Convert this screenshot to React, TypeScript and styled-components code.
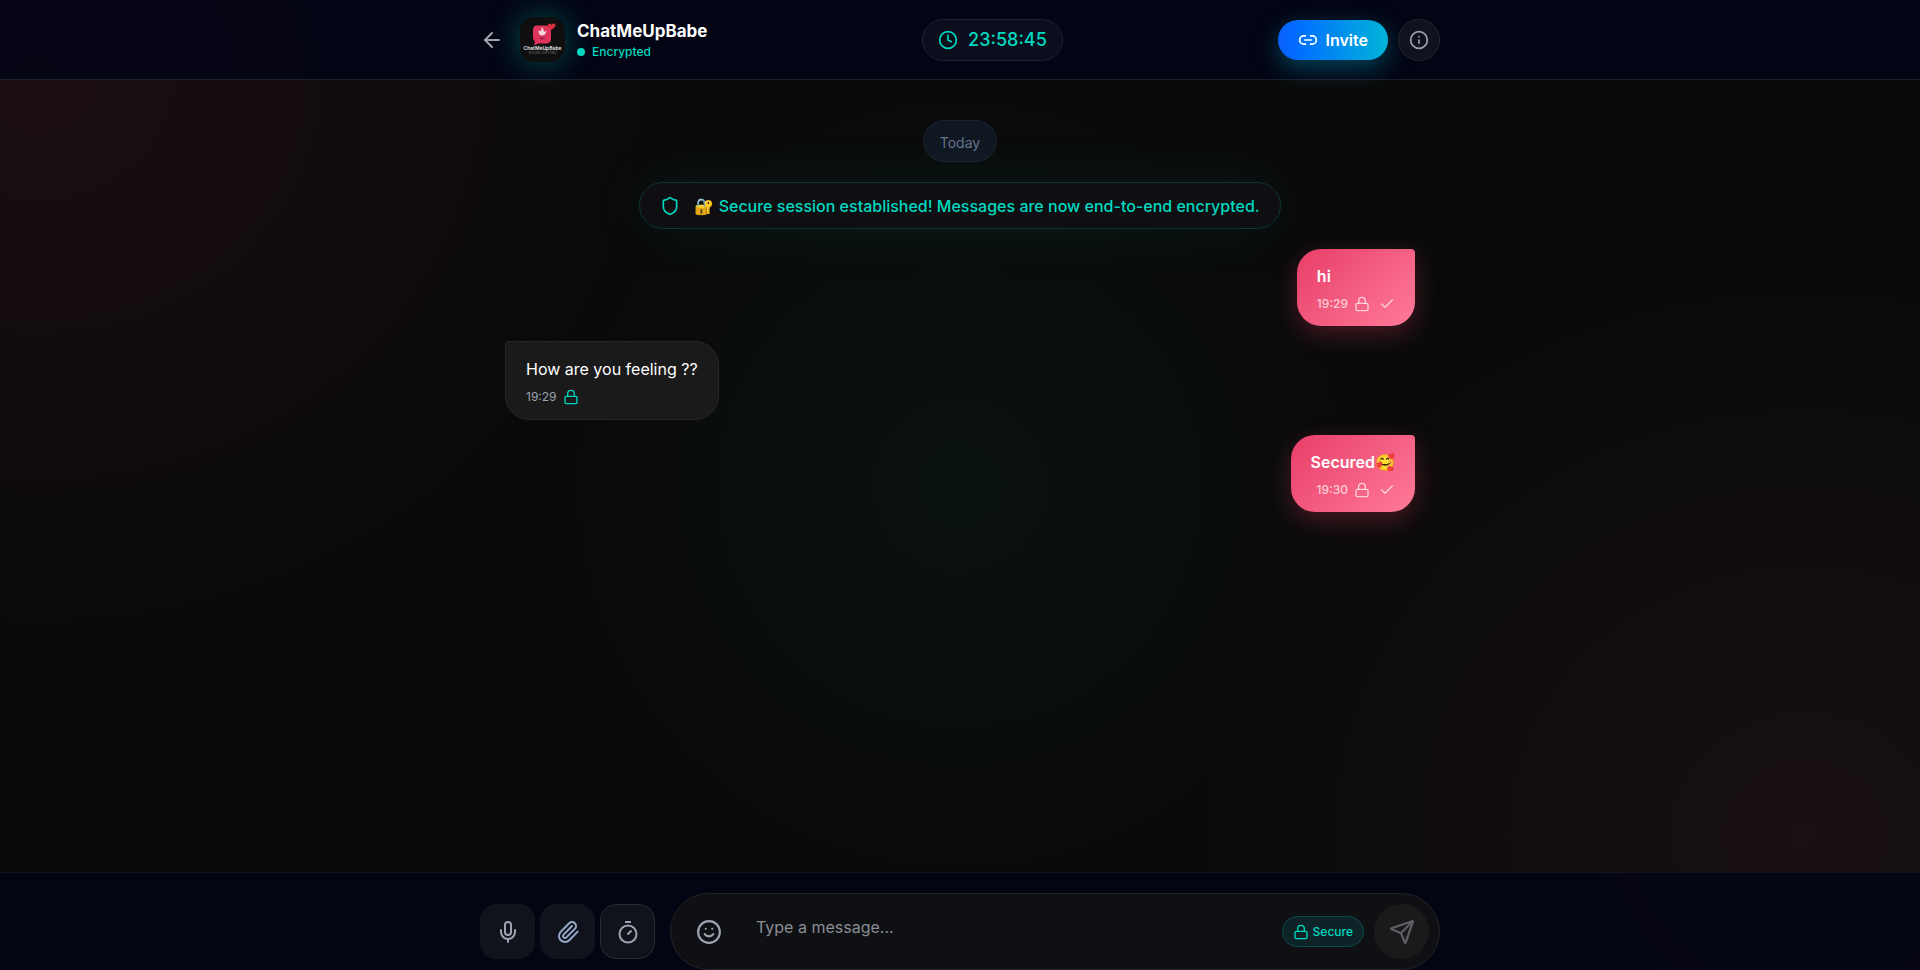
import React from 'react';
import styled, { createGlobalStyle, css } from 'styled-components';
import { ArrowLeft, Check, Clock, Info, Link2, Lock, Mic, Paperclip, Send, Shield, Smile } from 'lucide-react';

const teal = '#00d9c0';
const muted = '#9ca3af';

const GlobalStyle = createGlobalStyle`
  * { box-sizing: border-box; }
  body {
    margin: 0;
    background: #0a0a0a;
    color: #ffffff;
    font-family: Inter, "Liberation Sans", sans-serif;
  }
  button, textarea { font: inherit; color: inherit; }
  button { cursor: pointer; padding: 0; border: 0; background: none; }
`;

const Page = styled.div`
  min-height: 100vh;
  display: flex;
  flex-direction: column;
  background:
    radial-gradient(ellipse 620px 560px at 2% 8%, rgba(255, 71, 110, 0.07), transparent),
    radial-gradient(ellipse 620px 560px at 94% 86%, rgba(255, 107, 139, 0.06), transparent),
    radial-gradient(circle 400px at 50% 50%, rgba(0, 217, 192, 0.04), transparent),
    #0a0a0a;
`;

const Header = styled.header`
  border-bottom: 1px solid #1d1f2b;
  background: rgba(1, 4, 22, 0.8);
`;

const Bar = styled.div`
  width: 100%;
  max-width: 960px;
  margin: 0 auto;
`;

const HeaderBar = styled(Bar)`
  height: 79px;
  display: flex;
  align-items: center;
  justify-content: space-between;
`;

const Group = styled.div<{ $gap: number }>`
  display: flex;
  align-items: center;
  gap: ${({ $gap }) => $gap}px;
`;

const BackButton = styled.button`
  display: flex;
  margin-right: 4px;
  color: ${muted};
`;

const Logo = styled.svg`
  width: 45px;
  height: 45px;
  border-radius: 14px;
  background: #0f0f0f;
  box-shadow: 0 0 30px rgba(0, 217, 192, 0.35);
`;

const Title = styled.h1`
  margin: 0;
  font-size: 17px;
  line-height: 24px;
  font-weight: 700;
`;

const Status = styled.div`
  display: flex;
  align-items: center;
  gap: 7px;
  font-size: 12px;
  line-height: 18px;
  font-weight: 500;
  color: ${teal};
`;

const Dot = styled.span`
  width: 8px;
  height: 8px;
  border-radius: 50%;
  background: ${teal};
`;

const Timer = styled.div`
  height: 42px;
  padding: 0 15px;
  display: flex;
  align-items: center;
  gap: 10px;
  border: 1px solid #1f2230;
  border-radius: 21px;
  background: #0a0e1d;
  color: ${teal};
  font-size: 18px;
  font-weight: 500;
`;

const InviteButton = styled.button`
  height: 40px;
  padding: 0 20px;
  display: flex;
  align-items: center;
  gap: 8px;
  border-radius: 20px;
  background: linear-gradient(90deg, #0a60ff, #0070ff 20%, #00b4d8);
  box-shadow: 0 8px 24px rgba(0, 180, 216, 0.35);
  font-size: 16px;
  font-weight: 600;
`;

const InfoButton = styled.button`
  width: 42px;
  height: 42px;
  display: grid;
  place-items: center;
  border: 1px solid #23252f;
  border-radius: 50%;
  background: #10131e;
  color: ${muted};
`;

const Chat = styled.main`
  flex: 1;
  display: flex;
`;

const Messages = styled(Bar)`
  padding: 40px 25px;
  display: flex;
  flex-direction: column;
  align-items: flex-start;
`;

const DayPill = styled.div`
  align-self: center;
  height: 42px;
  padding: 3px 16px 0;
  margin-bottom: 20px;
  display: flex;
  align-items: center;
  border: 1px solid #1c2331;
  border-radius: 21px;
  background: #111722;
  color: #64748b;
  font-size: 14px;
`;

const Notice = styled.div`
  align-self: center;
  height: 47px;
  padding: 0 20px;
  margin-bottom: 20px;
  display: flex;
  align-items: center;
  gap: 14px;
  border: 1px solid #0d3733;
  border-radius: 24px;
  background: #0f0f13;
  box-shadow: 0 0 60px rgba(0, 217, 192, 0.08);
  color: ${teal};
  font-size: 16px;
  font-weight: 500;
`;

const Bubble = styled.article<{ $own?: boolean }>`
  padding: 15px 20px 14px;
  margin-bottom: 15px;
  font-size: 16px;
  line-height: 24px;
  ${({ $own }) =>
    $own
      ? css`
          align-self: flex-end;
          border-radius: 24px 4px 24px 24px;
          background: linear-gradient(135deg, #e83e68, #ff7a9a);
          box-shadow: 0 8px 24px rgba(255, 71, 110, 0.25);
          font-weight: 600;
        `
      : css`
          border: 1px solid #272727;
          border-radius: 4px 24px 24px 24px;
          background: #1a1a1a;
        `}
`;

const Meta = styled.footer<{ $own?: boolean }>`
  display: flex;
  align-items: center;
  justify-content: ${({ $own }) => ($own ? 'flex-end' : 'flex-start')};
  gap: 6px;
  margin-top: 8px;
  font-size: 12px;
  font-weight: ${({ $own }) => ($own ? 500 : 400)};
  line-height: 16px;
  color: ${({ $own }) => ($own ? 'rgba(255, 255, 255, 0.7)' : muted)};
`;

const LockMark = styled(Lock)<{ $accent?: boolean }>`
  color: ${({ $accent }) => ($accent ? teal : 'inherit')};
`;

const CheckMark = styled(Check)`
  margin-left: 3px;
`;

const Composer = styled.footer`
  border-top: 1px solid #14141c;
  background: rgba(1, 4, 20, 0.8);
`;

const ComposerBar = styled(Bar)`
  padding: 20px 0 0;
  display: flex;
  align-items: center;
  gap: 15px;
`;

const ToolButton = styled.button<{ $outlined?: boolean; $blue?: boolean }>`
  width: 55px;
  height: 55px;
  display: grid;
  place-items: center;
  border: 1px solid ${({ $outlined }) => ($outlined ? '#282a34' : 'transparent')};
  border-radius: 16px;
  background: #10131c;
  color: ${({ $blue }) => ($blue ? '#94a9c9' : muted)};
`;

const InputBox = styled.form`
  flex: 1;
  height: 77px;
  padding: 0 10px;
  display: flex;
  align-items: center;
  gap: 10px;
  border: 1px solid #232327;
  border-radius: 39px;
  background: #0f1014;
`;

const RoundButton = styled.button<{ $filled?: boolean }>`
  width: 55px;
  height: 55px;
  display: grid;
  place-items: center;
  border-radius: 50%;
  background: ${({ $filled }) => ($filled ? '#1a1a1a' : 'none')};
  color: ${({ $filled }) => ($filled ? '#5d6066' : muted)};
`;

const MessageInput = styled.textarea`
  flex: 1;
  min-width: 0;
  height: 55px;
  padding: 10px;
  border: 0;
  outline: 0;
  resize: none;
  overflow: hidden;
  background: transparent;
  font-size: 16px;
  line-height: 26px;
  &::placeholder { color: #8b8e94; opacity: 1; }
`;

const SecureBadge = styled.div`
  height: 31px;
  padding: 0 10px;
  display: flex;
  align-items: center;
  gap: 4px;
  border: 1px solid #0c4a48;
  border-radius: 16px;
  background: #0e2327;
  color: ${teal};
  font-size: 12px;
  font-weight: 500;
`;

const StopwatchIcon = () => (
  <svg width="24" height="24" viewBox="0 0 24 24" fill="none" stroke="currentColor" strokeWidth="2" strokeLinejoin="round" aria-hidden="true">
    <path d="M9 2h6M11.500 14.500l4-4" />
    <circle cx="12" cy="14" r="8.500" />
  </svg>
);

const LogoMark = () => (
  <Logo viewBox="0 0 45 45" role="img" aria-label="ChatMeUpBabe logo">
    <path d="M17 8.500h9q5 0 5 5v8q0 5-5 5h-8l-4 2 1-4q-2-1-2-4v-7q0-5 4-5z" fill="#e0345c" />
    <path d="M22 10q-1 3-1 4.500-1-1-2.500-1 0 5 3.500 5t4.500-4.500q-1.500 0-2.500 1 0-3-2-5z" fill="#f7d9dc" />
    <path d="M18.500 21q3.500-1 7 0-3.500 2.500-7 0z" fill="#8f1b3a" />
    <path d="M31.500 13l-3-3q-1.500-3 1-3.500 1.500 0 2 1.500.5-2 2.500-1.500 2.500 1 1 3.500z" fill="#d92f3f" />
    <text x="22.500" y="33" textAnchor="middle" fontSize="5" fontWeight="600" fill="#e8e8e8">ChatMeUpBabe</text>
    <text x="22.500" y="37" textAnchor="middle" fontSize="3" fill="#777777">SECURE CHATTING</text>
  </Logo>
);

type Message = { text: string; time: string; own?: boolean };

const messages: Message[] = [
  { text: 'hi', time: '19:29', own: true },
  { text: 'How are you feeling ??', time: '19:29' },
  { text: 'Secured🥰', time: '19:30', own: true },
];

export default function App() {
  return (
    <Page>
      <GlobalStyle />
      <Header>
        <HeaderBar>
          <Group $gap={12}>
            <BackButton aria-label="Back"><ArrowLeft size={24} strokeWidth={2} /></BackButton>
            <LogoMark />
            <div>
              <Title>ChatMeUpBabe</Title>
              <Status><Dot />Encrypted</Status>
            </div>
          </Group>
          <Timer><Clock size={20} />23:58:45</Timer>
          <Group $gap={10}>
            <InviteButton><Link2 size={20} />Invite</InviteButton>
            <InfoButton aria-label="Session info"><Info size={20} /></InfoButton>
          </Group>
        </HeaderBar>
      </Header>
      <Chat>
        <Messages>
          <DayPill>Today</DayPill>
          <Notice>
            <Shield size={20} />
            <span>🔐 Secure session established! Messages are now end-to-end encrypted.</span>
          </Notice>
          {messages.map((m) => (
            <Bubble key={m.text} $own={m.own}>
              {m.text}
              <Meta $own={m.own}>
                <time>{m.time}</time>
                <LockMark size={16} strokeWidth={2} $accent={!m.own} />
                {m.own && <CheckMark size={16} strokeWidth={2} />}
              </Meta>
            </Bubble>
          ))}
        </Messages>
      </Chat>
      <Composer>
        <ComposerBar>
          <Group $gap={5}>
            <ToolButton aria-label="Record voice"><Mic size={24} /></ToolButton>
            <ToolButton aria-label="Attach file" $blue><Paperclip size={24} /></ToolButton>
            <ToolButton aria-label="Message timer" $outlined><StopwatchIcon /></ToolButton>
          </Group>
          <InputBox onSubmit={(e) => e.preventDefault()}>
            <RoundButton type="button" aria-label="Emoji"><Smile size={26} /></RoundButton>
            <MessageInput aria-label="Message" placeholder="Type a message..." />
            <SecureBadge><Lock size={16} />Secure</SecureBadge>
            <RoundButton $filled aria-label="Send"><Send size={26} strokeWidth={2} /></RoundButton>
          </InputBox>
        </ComposerBar>
      </Composer>
    </Page>
  );
}
